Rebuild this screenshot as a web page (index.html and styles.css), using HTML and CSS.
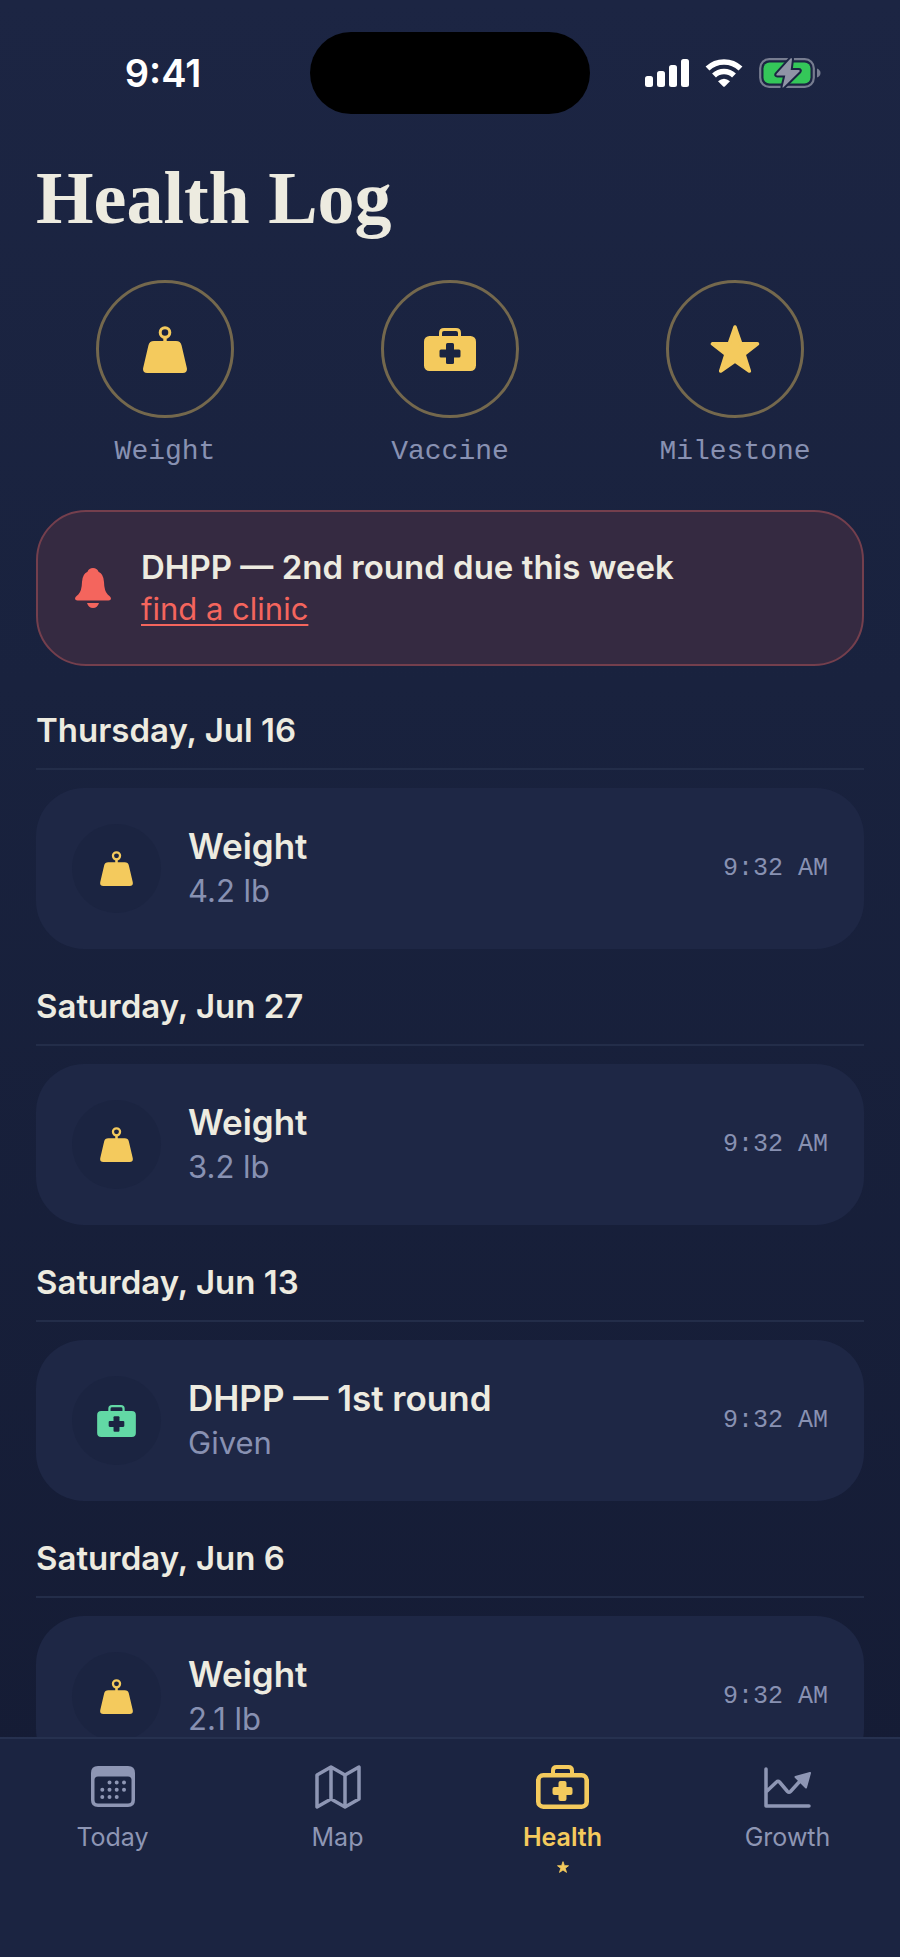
FILE: index.html
```
<!DOCTYPE html>
<html lang="en">
<head>
    <meta charset="UTF-8">
    <meta name="viewport" content="width=device-width, initial-scale=1.0">
    <title>Health Log</title>
    <link rel="stylesheet" href="styles.css">
</head>
<body>

    <!-- Shared icons -->
    <svg class="sprite" aria-hidden="true">
        <symbol id="icon-weight" viewBox="0 0 44 47">
            <circle cx="22" cy="6.5" r="4.8" fill="none" stroke="currentColor" stroke-width="3"/>
            <path d="M20.3 10h3.4v5h9.3q4.6 0 5.6 4.4l5.2 22.3q1 5.3-4 5.3H4.2q-5 0-4-5.3l5.2-22.3Q6.4 15 11 15h9.3z" fill="currentColor"/>
        </symbol>
        <symbol id="icon-case" viewBox="0 0 52 43">
            <path d="M16.5 9V5q0-3.5 3.5-3.5h12q3.5 0 3.5 3.5v4" fill="none" stroke="currentColor" stroke-width="3"/>
            <rect y="8" width="52" height="35" rx="5.5" fill="currentColor"/>
            <rect class="cut" x="22" y="15" width="8" height="21" rx="1.5"/>
            <rect class="cut" x="15.5" y="21.5" width="21" height="8" rx="1.5"/>
        </symbol>
        <symbol id="icon-star" viewBox="0 0 48 47">
            <path d="M24 2l5.6 16.2 16.4.3-13.2 10.1 5.2 16.4L24 35.2 10 45l5.2-16.4L2 18.5l16.4-.3z" fill="currentColor" stroke="currentColor" stroke-width="3.5" stroke-linejoin="round"/>
        </symbol>
    </svg>

    <div class="app">
        <header class="status-bar">
            <span class="clock">9:41</span>
            <span class="island"></span>
            <span class="status-icons">
                <svg width="44" height="28" viewBox="0 0 44 28" fill="#fff">
                    <rect x="0" y="17" width="8" height="11" rx="2.5"/>
                    <rect x="12" y="12" width="8" height="16" rx="2.5"/>
                    <rect x="24" y="6" width="8" height="22" rx="2.5"/>
                    <rect x="36" y="0" width="8" height="28" rx="2.5"/>
                </svg>
                <svg width="38" height="28" viewBox="0 0 38 28">
                    <path d="M2.5 9.5a24 24 0 0 1 33 0M9 16.5a14.5 14.5 0 0 1 20 0" fill="none" stroke="#fff" stroke-width="5.6"/>
                    <path d="M13 22.2q6-5 12 0l-5.2 5.3q-.8.7-1.6 0z" fill="#fff"/>
                </svg>
                <svg width="62" height="32" viewBox="0 0 62 32">
                    <rect x="1.2" y="2.2" width="53.6" height="27.6" rx="9" fill="none" stroke="#777d90" stroke-width="2.2"/>
                    <path d="M58 11.5q3.5 1.5 3.5 4.5t-3.5 4.5z" fill="#777d90"/>
                    <rect x="4.5" y="5.5" width="47" height="21" rx="6" fill="#34c759"/>
                    <path d="M31.5 1.5L17.5 17q-.8 1.5.8 1.5h8L23.500 30q0 1.2 1 .3L40.500 14.500q1-1.500-.8-1.500h-8L33 2q-.5-1.500-1.500-.5z" fill="#9094a6" stroke="#1b2442" stroke-width="4" paint-order="stroke" stroke-linejoin="round"/>
                </svg>
            </span>
        </header>

        <main class="content">
            <h1>Health Log</h1>

            <div class="actions">
                <button class="action">
                    <span class="ring"><svg width="44" height="47"><use href="#icon-weight"/></svg></span>
                    Weight
                </button>
                <button class="action">
                    <span class="ring"><svg width="52" height="43"><use href="#icon-case"/></svg></span>
                    Vaccine
                </button>
                <button class="action">
                    <span class="ring"><svg width="50" height="48"><use href="#icon-star"/></svg></span>
                    Milestone
                </button>
            </div>

            <div class="alert">
                <svg width="36" height="40" viewBox="0 0 36 40" fill="currentColor">
                    <path d="M18 0q4 0 5.5 3.7 5.2 2.3 5.5 10.3.2 9 3.7 12.5Q36 29 36 30.500q0 2-2.500 2h-31Q0 32.500 0 30.500q0-1.500 3.300-4Q6.800 23 7 14q.3-8 5.500-10.300Q14 0 18 0z"/>
                    <path d="M12 35h12q-1.5 5-6 5t-6-5z"/>
                </svg>
                <div class="alert-text">
                    <strong>DHPP — 2nd round due this week</strong>
                    <a href="#clinic">find a clinic</a>
                </div>
            </div>

            <section class="day">
                <h2>Thursday, Jul 16</h2>
                <div class="entry">
                    <span class="badge"><svg width="33" height="35"><use href="#icon-weight"/></svg></span>
                    <div class="entry-text">
                        <h3>Weight</h3>
                        <p>4.2 lb</p>
                    </div>
                    <time>9:32 AM</time>
                </div>
            </section>

            <section class="day">
                <h2>Saturday, Jun 27</h2>
                <div class="entry">
                    <span class="badge"><svg width="33" height="35"><use href="#icon-weight"/></svg></span>
                    <div class="entry-text">
                        <h3>Weight</h3>
                        <p>3.2 lb</p>
                    </div>
                    <time>9:32 AM</time>
                </div>
            </section>

            <section class="day">
                <h2>Saturday, Jun 13</h2>
                <div class="entry">
                    <span class="badge green"><svg width="39" height="32"><use href="#icon-case"/></svg></span>
                    <div class="entry-text">
                        <h3>DHPP — 1st round</h3>
                        <p>Given</p>
                    </div>
                    <time>9:32 AM</time>
                </div>
            </section>

            <section class="day">
                <h2>Saturday, Jun 6</h2>
                <div class="entry">
                    <span class="badge"><svg width="33" height="35"><use href="#icon-weight"/></svg></span>
                    <div class="entry-text">
                        <h3>Weight</h3>
                        <p>2.1 lb</p>
                    </div>
                    <time>9:32 AM</time>
                </div>
            </section>
        </main>

        <nav class="tab-bar">
            <a href="#today">
                <svg width="44" height="44" viewBox="0 -1 44 44" fill="currentColor">
                    <path fill-rule="evenodd" d="M7 0h30q7 0 7 7v27q0 7-7 7H7q-7 0-7-7V7q0-7 7-7zM7 10.5q-3.5 0-3.5 3.5v20q0 3.5 3.5 3.5h30q3.5 0 3.5-3.5V14q0-3.5-3.5-3.5z"/>
                    <path d="M18.5 16.5h.01M25.7 16.5h.01M33 16.5h.01M11.3 23.7h.01M18.5 23.7h.01M25.7 23.7h.01M33 23.7h.01M11.3 30.9h.01M18.5 30.9h.01M25.7 30.9h.01" stroke="currentColor" stroke-width="4" stroke-linecap="round"/>
                </svg>
                Today
            </a>
            <a href="#map">
                <svg width="46" height="44" viewBox="0 0 46 44" fill="none" stroke="currentColor" stroke-width="3.5" stroke-linejoin="round">
                    <path d="M2 10l14-8 14 8 14-8v32l-14 8-14-8-14 8zM16 2v32M30 10v32"/>
                </svg>
                Map
            </a>
            <a href="#health" class="active" aria-current="page">
                <svg width="53" height="44" viewBox="0 0 53 44">
                    <path d="M17 9V5.5q0-3.5 3.5-3.5h12Q36 2 36 5.5V9" fill="none" stroke="currentColor" stroke-width="4"/>
                    <rect x="2.3" y="10.3" width="48.4" height="31.4" rx="5" fill="none" stroke="currentColor" stroke-width="4.6"/>
                    <rect x="22.5" y="16" width="8" height="20" rx="2" fill="currentColor"/>
                    <rect x="16.5" y="22" width="20" height="8" rx="2" fill="currentColor"/>
                </svg>
                Health
                <svg class="marker" width="12" height="12"><use href="#icon-star"/></svg>
            </a>
            <a href="#growth">
                <svg width="48" height="44" viewBox="0 -2 48 44" fill="none" stroke="currentColor" stroke-width="3.5" stroke-linecap="round" stroke-linejoin="round">
                    <path d="M2 2v37h43M2 25l10.5-10q1.5-1.5 3 0l8 9.5q1.5 1.5 3 0L37 13"/>
                    <path d="M46 6L31.5 10l10.5 10.5z" fill="currentColor" stroke-width="2"/>
                </svg>
                Growth
            </a>
        </nav>
    </div>

</body>
</html>
```
FILE: styles.css
```
* {
    box-sizing: border-box;
}

body {
    margin: 0;
    font-family: Inter, "Liberation Sans", sans-serif;
    color: #edebe0;
    background: #151d36;
}

h1, h2, h3, p {
    margin: 0;
}

.sprite {
    position: absolute;
    width: 0;
    height: 0;
}

.cut {
    fill: #1b2441;
}

.app {
    display: flex;
    flex-direction: column;
    height: 100vh;
    background: linear-gradient(#1c2543, #19223e 35%, #151c35 90%);
}

/* Status bar */
.status-bar {
    display: grid;
    grid-template-columns: 1fr 280px 1fr;
    align-items: center;
    flex-shrink: 0;
    height: 145px;
}

.clock {
    padding-left: 16px;
    font-size: 38px;
    font-weight: 600;
    color: #fff;
    text-align: center;
}

.island {
    height: 82px;
    border-radius: 41px;
    background: #000;
}

.status-icons {
    display: flex;
    justify-content: center;
    align-items: center;
    gap: 16px;
    padding-right: 24px;
}

/* Scrolling log */
.content {
    flex: 1;
    min-height: 0;
    padding: 5px 36px 0;
    overflow-y: auto;
    scrollbar-width: none;
}

h1 {
    font-family: "Liberation Serif", serif;
    font-size: 74px;
    font-weight: 700;
    line-height: 96px;
}

/* Quick actions */
.actions {
    display: grid;
    grid-template-columns: repeat(3, 1fr);
    gap: 27px;
    margin-top: 34px;
}

.action {
    display: flex;
    flex-direction: column;
    align-items: center;
    gap: 18px;
    padding: 0;
    border: none;
    background: none;
    font-family: "Liberation Mono", monospace;
    font-size: 28px;
    line-height: 32px;
    color: #8891b2;
    cursor: pointer;
}

.ring {
    display: flex;
    justify-content: center;
    align-items: center;
    width: 138px;
    height: 138px;
    border: 3px solid #74684d;
    border-radius: 50%;
    color: #f4ca5d;
}

/* Vaccine reminder */
.alert {
    display: flex;
    align-items: center;
    gap: 30px;
    margin: 42px 0 44px;
    padding: 34px 37px;
    border: 2px solid #743f4d;
    border-radius: 50px;
    background: #352a41;
    color: #f4655d;
}

.alert-text {
    display: flex;
    flex-direction: column;
    align-items: flex-start;
    font-size: 33px;
    line-height: 42px;
}

.alert-text strong {
    font-weight: 600;
    color: #edebe0;
}

.alert-text a {
    font-size: 31px;
    color: inherit;
    text-underline-offset: 4px;
    text-decoration-thickness: 2px;
}

/* Log entries */
.day {
    margin-bottom: 37px;
}

.day h2 {
    margin-bottom: 18px;
    padding-bottom: 18px;
    border-bottom: 2px solid #232d49;
    font-size: 33px;
    font-weight: 600;
    line-height: 40px;
}

.entry {
    display: flex;
    align-items: center;
    gap: 27px;
    padding: 36px;
    border-radius: 48px;
    background: #1e2745;
}

.badge {
    display: flex;
    justify-content: center;
    align-items: center;
    width: 89px;
    height: 89px;
    border-radius: 50%;
    background: #1b2441;
    color: #f4ca5d;
}

.badge.green {
    color: #62d8a5;
}

.entry-text {
    flex: 1;
}

.entry h3 {
    font-size: 35px;
    font-weight: 600;
    line-height: 44px;
}

.entry p {
    font-size: 31px;
    line-height: 45px;
    color: #8891b2;
}

.entry time {
    font-family: "Liberation Mono", monospace;
    font-size: 25px;
    color: #8891b2;
}

/* Bottom tabs */
.tab-bar {
    display: grid;
    grid-template-columns: repeat(4, 1fr);
    flex-shrink: 0;
    height: 220px;
    padding-top: 26px;
    border-top: 2px solid #26314f;
    background: #1b2441;
}

.tab-bar a {
    display: flex;
    flex-direction: column;
    align-items: center;
    gap: 11px;
    font-size: 25px;
    line-height: 34px;
    color: #8e96b4;
    text-decoration: none;
}

.tab-bar .active {
    font-weight: 600;
    color: #f4ca5d;
}

.marker {
    margin-top: -4px;
}
```
